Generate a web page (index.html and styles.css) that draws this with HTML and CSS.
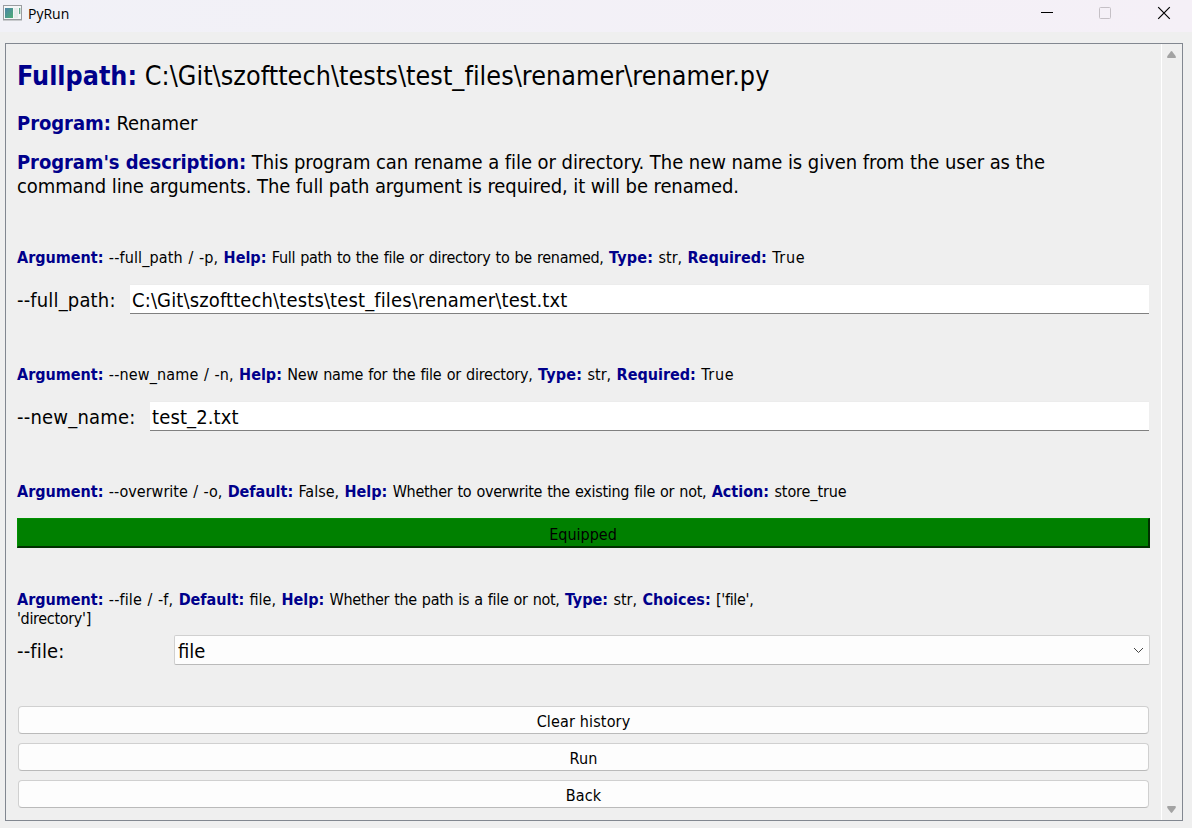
FILE: index.html
```html
<!DOCTYPE html>
<html lang="en">
<head>
<meta charset="utf-8">
<title>PyRun</title>
<link rel="stylesheet" href="styles.css">
</head>
<body>
<header class="titlebar">
  <svg class="app-icon" width="20" height="17" viewBox="0 0 20 17">
    <defs><linearGradient id="pane" x1="0" y1="0" x2="1" y2="1"><stop offset="0" stop-color="#4c83a8"/><stop offset="1" stop-color="#4fae75"/></linearGradient></defs>
    <rect x=".5" y="1.500" width="18" height="14" fill="#f5f7f7" stroke="#9a9ca0"/>
    <path d="M0 16.500h19" stroke="#c9cbce"/>
    <rect x="2" y="4" width="8" height="10" fill="url(#pane)"/>
    <rect x="11" y="4" width="4" height="10" fill="#e6eceb"/>
    <rect x="16" y="4" width="1.300" height="6" fill="#63a98a"/>
  </svg>
  <span class="title">PyRun</span>
  <svg class="controls" width="132" height="28" viewBox="0 0 132 28" fill="none">
    <path d="M1 12.500h12" stroke="#000"/>
    <rect x="59.500" y="7.500" width="11" height="11" rx="1" stroke="#c5c0c6"/>
    <path d="M118.200 7.200l11.600 11.600M129.800 7.200l-11.600 11.600" stroke="#000" stroke-width="1.200"/>
  </svg>
</header>
<main class="frame">
  <section class="content">
    <h1 class="fullpath"><b>Fullpath:</b> <span>C:\Git\szofttech\tests\test_files\renamer\renamer.py</span></h1>
    <p class="program"><b>Program:</b> Renamer</p>
    <p class="description"><b>Program's description:</b> <span class="line-one">This program can rename a file or directory. The new name is given from the user as the</span><br><span class="line-two">command line arguments. The full path argument is required, it will be renamed.</span></p>

    <p class="info"><b>Argument:</b> <span class="flags">--full_path / -p,</span> <b>Help:</b> <span class="help">Full path to the file or directory to be renamed,</span> <b class="type">Type:</b> str, <b>Required:</b> <span class="value">True</span></p>
    <div class="field path-field"><label>--full_path:</label><div class="input">C:\Git\szofttech\tests\test_files\renamer\test.txt</div></div>

    <p class="info"><b>Argument:</b> <span class="flags">--new_name / -n,</span> <b>Help:</b> <span class="help short">New name for the file or directory,</span> <b class="type">Type:</b> str, <b>Required:</b> <span class="value">True</span></p>
    <div class="field name-field"><label>--new_name:</label><div class="input">test_2.txt</div></div>

    <p class="info"><b>Argument:</b> <span>--overwrite / -o,</span> <b>Default:</b> False, <b>Help:</b> <span class="help">Whether to overwrite the existing file or not,</span> <b>Action:</b> <span class="action">store_true</span></p>
    <div class="equipped">Equipped</div>

    <p class="info"><b>Argument:</b> <span class="flags">--file / -f,</span> <b>Default:</b> file, <b>Help:</b> <span class="help long">Whether the path is a file or not,</span> <b>Type:</b> str, <b>Choices:</b> <span class="choice">['file',<br>'directory']</span></p>
    <div class="field file-field"><label>--file:</label><div class="select"><span>file</span>
      <svg width="11" height="7" viewBox="0 0 11 7" fill="none"><path d="M1 1l4.500 4.500L10 1" stroke="#444"/></svg></div></div>

    <div class="buttons">
      <div class="button">Clear history</div>
      <div class="button">Run</div>
      <div class="button">Back</div>
    </div>
  </section>
  <aside class="scrollbar">
    <svg width="9" height="7" viewBox="0 0 9 7"><path d="M3.800 .5Q4.500 -.3 5.200 .5L8.600 5Q9.300 7 8 7H1Q-.3 7 .4 5Z" fill="#a3a3a3"/></svg>
    <svg width="9" height="7" viewBox="0 0 9 7"><path d="M3.800 6.500Q4.500 7.300 5.200 6.500L8.600 2Q9.300 0 8 0H1Q-.3 0 .4 2Z" fill="#a3a3a3"/></svg>
  </aside>
</main>
</body>
</html>
```
FILE: styles.css
```css
* { box-sizing: border-box; }
body {
  margin: 0;
  width: 1192px;
  height: 828px;
  overflow: hidden;
  background: #efefef;
  color: #000;
  font-family: "DejaVu Sans Condensed", "DejaVu Sans", sans-serif;
  font-stretch: condensed;
}
.titlebar {
  display: flex;
  height: 32px;
  padding-left: 3px;
  background: linear-gradient(90deg, #f1f1f7, #f5f0f7);
}
.app-icon { margin-top: 4px; }
.title { margin-left: 5px; font: 14px/28px "Open Sans", sans-serif; }
.controls { margin-left: auto; margin-right: 20px; }
.frame {
  display: flex;
  width: 1178px;
  height: 778px;
  margin: 11px 0 0 5px;
  border: 1px solid #828790;
}
.content { flex: 1; padding: 10px 11px 0; white-space: nowrap; }
h1, p { margin: 0; font-weight: normal; }
b { color: #00008b; font-weight: bold; }
.fullpath { height: 44px; font-size: 26.67px; line-height: 44px; }
.fullpath span { letter-spacing: 0.06px; }
.program { margin-top: 12px; height: 26px; font-size: 20px; line-height: 26px; letter-spacing: -0.05px; }
.description { margin-top: 14px; height: 48px; font-size: 20px; line-height: 24px; }
.description b { letter-spacing: -0.09px; }
.line-one { letter-spacing: -0.06px; }
.line-two { letter-spacing: -0.1px; }
.info { font-size: 16px; line-height: 19px; word-spacing: 0.8px; }
.flags { letter-spacing: 0.14px; }
.help { letter-spacing: -0.29px; }
.help.short { letter-spacing: -0.23px; }
.help.long { letter-spacing: -0.32px; }
.type { letter-spacing: 0.2px; }
.value { letter-spacing: 0.7px; }
.choice { letter-spacing: -0.33px; }
.action { letter-spacing: -0.1px; }
.description + .info { margin-top: 50px; }
.field { display: flex; height: 30px; font-size: 20px; line-height: 32px; }
.field + .info { margin-top: 51px; }
.path-field, .name-field { margin-top: 17px; }
.path-field label { width: 113px; letter-spacing: 0.16px; }
.name-field label { width: 133px; letter-spacing: 0.2px; }
.file-field label { width: 157px; letter-spacing: 0.14px; }
.input {
  flex: 1;
  margin-right: 1px;
  padding-left: 2px;
  background: #fff;
  border-top: 1px solid #ececec;
  border-bottom: 1px solid #808080;
  letter-spacing: 0.13px;
  line-height: 30px;
}
.equipped {
  height: 30px;
  margin-top: 17px;
  border: solid;
  border-width: 1px 2px 2px 1px;
  border-color: #009000 #003000 #003000 #009000;
  background: #008000;
  font-size: 16px;
  line-height: 31px;
  text-align: center;
}
.equipped + .info { margin-top: 42px; }
.file-field { margin-top: 7px; }
.select {
  display: flex;
  flex: 1;
  align-items: center;
  justify-content: space-between;
  padding: 0 5px 0 3px;
  border: 1px solid #d0d0d0;
  border-bottom-color: #bababa;
  border-radius: 2px;
  background: #fdfdfd;
}
.select span { padding-top: 2px; line-height: 28px; }
.buttons { display: grid; gap: 9px; margin: 41px 1px 0; }
.button {
  height: 28px;
  border: 1px solid #d0d0d0;
  border-bottom-color: #bababa;
  border-radius: 4px;
  background: #fdfdfd;
  font-size: 16px;
  letter-spacing: 0.15px;
  line-height: 29px;
  text-align: center;
}
.scrollbar {
  display: flex;
  flex-direction: column;
  justify-content: space-between;
  align-items: flex-start;
  width: 21px;
  padding: 7px 0 7px 5px;
  border-left: 1px solid #fff;
}
```
